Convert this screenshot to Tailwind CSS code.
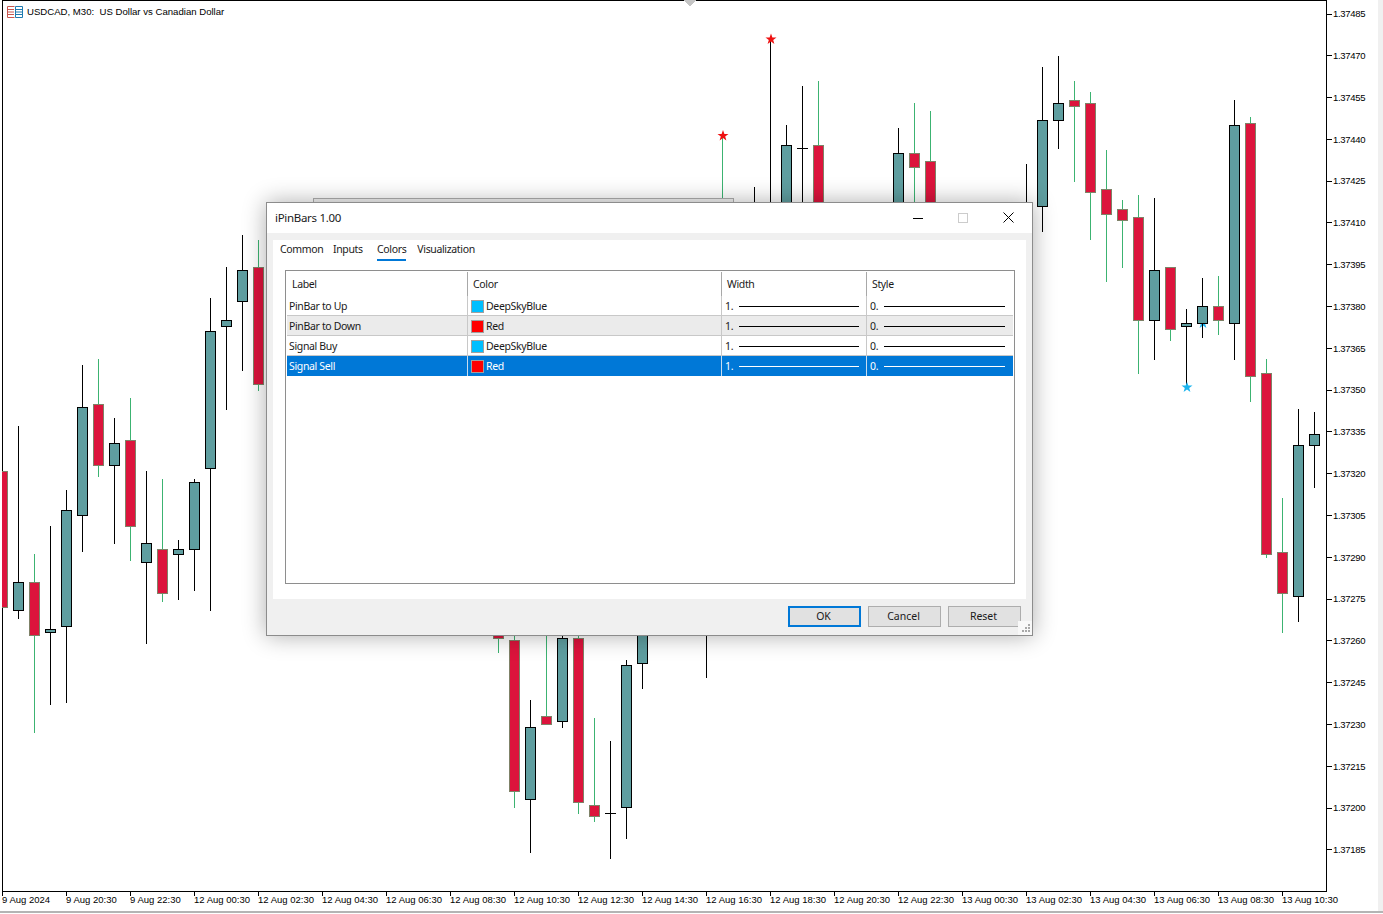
<!DOCTYPE html>
<html lang="en">
<head>
<meta charset="utf-8">
<title>USDCAD, M30</title>
<script src="https://cdn.jsdelivr.net/npm/@tailwindcss/browser@4"></script>
</head>
<body class="bg-white">
<div class="relative w-[1383px] h-[914px] overflow-hidden bg-white text-black font-['Liberation_Sans',sans-serif] text-[9.5px] leading-none">

  <!-- chart + price axis + time axis -->
  <div class="flex h-[913px] border-b-2 border-[#b4b4b4]">
    <div class="flex flex-col w-[1378px]">
      <div class="flex h-[892px]">
        <div class="relative ml-[2px] w-[1325px] h-[892px] border border-black">
          <svg class="absolute left-[-1px] top-[-1px]" width="1325" height="892" viewBox="2 0 1325 892" shape-rendering="crispEdges" fill="none">
            <polygon points="684,0 696,0 690,7" fill="#c4c4c4"/>
            <polygon fill="#1cb4ee" points="1203,318 1204.4,321.4 1208.5,321.5 1205.2,324 1206.4,327.9 1203,325.6 1199.6,327.9 1200.8,324 1197.5,321.5 1201.6,321.4" shape-rendering="geometricPrecision"/>
            <path stroke="#000" d="M18.5 426V619M50.5 526V705M66.5 490V703M82.5 365V552M114.5 418V544M146.5 471V644M178.5 540V600M194.5 479V591M210.5 298V611M226.5 267V410M242.5 235V371M530.5 700V853M562.5 630V728M610.5 741V859M605 813.5H616M626.5 660V839M642.5 630V689M706.5 630V678M754.5 187V210M770.5 39V210M786.5 125V210M802.5 86V210M797 148.5H808M898.5 128V210M1026.5 164V210M1042.5 67V232M1058.5 56V149M1154.5 198V360M1186.5 309V388M1202.5 278V338M1234.5 100V360M1298.5 409V622M1314.5 412V488"/>
            <path stroke="#3cb371" d="M34.5 554V733M98.5 359V477M130.5 398V561M162.5 479V602M258.5 240V391M498.5 630V653M514.5 630V808M546.5 630V724M578.5 630V814M594.5 718V822M722.5 136V210M818.5 81V210M914.5 103V210M930.5 111V210M1074.5 81V182M1090.5 92V240M1106.5 150V282M1122.5 200V268M1138.5 195V374M1170.5 329V341M1218.5 276V335M1250.5 117V402M1266.5 359V558M1282.5 498V633"/>
            <g fill="#5f9ea0" stroke="#000">
              <rect x="13.5" y="582.5" width="10" height="28"/>
              <rect x="45.5" y="629.5" width="10" height="3"/>
              <rect x="61.5" y="510.5" width="10" height="116"/>
              <rect x="77.5" y="407.5" width="10" height="108"/>
              <rect x="109.5" y="443.5" width="10" height="22"/>
              <rect x="141.5" y="543.5" width="10" height="19"/>
              <rect x="173.5" y="549.5" width="10" height="5"/>
              <rect x="189.5" y="482.5" width="10" height="67"/>
              <rect x="205.5" y="331.5" width="10" height="137"/>
              <rect x="221.5" y="320.5" width="10" height="6"/>
              <rect x="237.5" y="270.5" width="10" height="31"/>
              <rect x="525.5" y="727.5" width="10" height="72"/>
              <rect x="557.5" y="638.5" width="10" height="83"/>
              <rect x="621.5" y="665.5" width="10" height="142"/>
              <rect x="637.5" y="630.5" width="10" height="33"/>
              <rect x="781.5" y="145.5" width="10" height="70"/>
              <rect x="893.5" y="153.5" width="10" height="60"/>
              <rect x="1037.5" y="120.5" width="10" height="86"/>
              <rect x="1053.5" y="103.5" width="10" height="17"/>
              <rect x="1149.5" y="270.5" width="10" height="50"/>
              <rect x="1181.5" y="323.5" width="10" height="3"/>
              <rect x="1197.5" y="306.5" width="10" height="17"/>
              <rect x="1229.5" y="125.5" width="10" height="198"/>
              <rect x="1293.5" y="445.5" width="10" height="151"/>
              <rect x="1309.5" y="434.5" width="10" height="11"/>
            </g>
            <g fill="#dc143c" stroke="#7f8268">
              <rect x="-2.5" y="471.5" width="10" height="136"/>
              <rect x="29.5" y="582.5" width="10" height="53"/>
              <rect x="93.5" y="404.5" width="10" height="61"/>
              <rect x="125.5" y="440.5" width="10" height="86"/>
              <rect x="157.5" y="549.5" width="10" height="44"/>
              <rect x="253.5" y="267.5" width="10" height="117"/>
              <rect x="493.5" y="630.5" width="10" height="8"/>
              <rect x="509.5" y="640.5" width="10" height="151"/>
              <rect x="541.5" y="716.5" width="10" height="8"/>
              <rect x="573.5" y="638.5" width="10" height="164"/>
              <rect x="589.5" y="805.5" width="10" height="11"/>
              <rect x="813.5" y="145.5" width="10" height="70"/>
              <rect x="909.5" y="153.5" width="10" height="14"/>
              <rect x="925.5" y="161.5" width="10" height="50"/>
              <rect x="1069.5" y="100.5" width="10" height="6"/>
              <rect x="1085.5" y="103.5" width="10" height="89"/>
              <rect x="1101.5" y="189.5" width="10" height="25"/>
              <rect x="1117.5" y="209.5" width="10" height="11"/>
              <rect x="1133.5" y="217.5" width="10" height="103"/>
              <rect x="1165.5" y="267.5" width="10" height="62"/>
              <rect x="1213.5" y="306.5" width="10" height="14"/>
              <rect x="1245.5" y="123.5" width="10" height="253"/>
              <rect x="1261.5" y="373.5" width="10" height="181"/>
              <rect x="1277.5" y="552.5" width="10" height="41"/>
            </g>
            <g shape-rendering="geometricPrecision">
              <polygon fill="#ee1111" points="723,130 724.4,133.9 728.5,134 725.2,136.5 726.4,140.4 723,138.1 719.6,140.4 720.8,136.5 717.5,134 721.6,133.9"/>
              <polygon fill="#ee1111" points="771,33.5 772.4,37.4 776.5,37.5 773.2,40 774.4,43.9 771,41.6 767.6,43.9 768.8,40 765.5,37.5 769.6,37.4"/>
              <polygon fill="#1cb4ee" points="1187,382 1188.4,385.4 1192.5,385.5 1189.2,388 1190.4,391.9 1187,389.6 1183.6,391.9 1184.8,388 1181.5,385.5 1185.6,385.4"/>
            </g>
          </svg>
          <!-- chart title -->
          <div class="absolute left-[4px] top-[5px] flex items-center gap-[4px] text-[9.6px]">
            <svg width="16" height="12" viewBox="0 0 16 12" fill="none">
              <path stroke="#c8564e" d="M7.5 .5H.5V11.5H7.5M1 3.5H7M1 6H7M1 8.5H7"/>
              <path stroke="#1f7bb0" d="M8.5 .5H15.5V11.5H8.5V.5M9 3.5H15M9 6H15M9 8.5H15"/>
            </svg>
            <span class="whitespace-pre">USDCAD, M30:  US Dollar vs Canadian Dollar</span>
          </div>
        </div>
        <!-- price axis -->
        <div class="flex flex-col mt-[-6.9px] tracking-[-0.3px]">
          <div class="flex items-center h-[41.8px]"><span class="w-[5px] h-px bg-black"></span><span class="ml-[1px]">1.37485</span></div>
          <div class="flex items-center h-[41.8px]"><span class="w-[5px] h-px bg-black"></span><span class="ml-[1px]">1.37470</span></div>
          <div class="flex items-center h-[41.8px]"><span class="w-[5px] h-px bg-black"></span><span class="ml-[1px]">1.37455</span></div>
          <div class="flex items-center h-[41.8px]"><span class="w-[5px] h-px bg-black"></span><span class="ml-[1px]">1.37440</span></div>
          <div class="flex items-center h-[41.8px]"><span class="w-[5px] h-px bg-black"></span><span class="ml-[1px]">1.37425</span></div>
          <div class="flex items-center h-[41.8px]"><span class="w-[5px] h-px bg-black"></span><span class="ml-[1px]">1.37410</span></div>
          <div class="flex items-center h-[41.8px]"><span class="w-[5px] h-px bg-black"></span><span class="ml-[1px]">1.37395</span></div>
          <div class="flex items-center h-[41.8px]"><span class="w-[5px] h-px bg-black"></span><span class="ml-[1px]">1.37380</span></div>
          <div class="flex items-center h-[41.8px]"><span class="w-[5px] h-px bg-black"></span><span class="ml-[1px]">1.37365</span></div>
          <div class="flex items-center h-[41.8px]"><span class="w-[5px] h-px bg-black"></span><span class="ml-[1px]">1.37350</span></div>
          <div class="flex items-center h-[41.8px]"><span class="w-[5px] h-px bg-black"></span><span class="ml-[1px]">1.37335</span></div>
          <div class="flex items-center h-[41.8px]"><span class="w-[5px] h-px bg-black"></span><span class="ml-[1px]">1.37320</span></div>
          <div class="flex items-center h-[41.8px]"><span class="w-[5px] h-px bg-black"></span><span class="ml-[1px]">1.37305</span></div>
          <div class="flex items-center h-[41.8px]"><span class="w-[5px] h-px bg-black"></span><span class="ml-[1px]">1.37290</span></div>
          <div class="flex items-center h-[41.8px]"><span class="w-[5px] h-px bg-black"></span><span class="ml-[1px]">1.37275</span></div>
          <div class="flex items-center h-[41.8px]"><span class="w-[5px] h-px bg-black"></span><span class="ml-[1px]">1.37260</span></div>
          <div class="flex items-center h-[41.8px]"><span class="w-[5px] h-px bg-black"></span><span class="ml-[1px]">1.37245</span></div>
          <div class="flex items-center h-[41.8px]"><span class="w-[5px] h-px bg-black"></span><span class="ml-[1px]">1.37230</span></div>
          <div class="flex items-center h-[41.8px]"><span class="w-[5px] h-px bg-black"></span><span class="ml-[1px]">1.37215</span></div>
          <div class="flex items-center h-[41.8px]"><span class="w-[5px] h-px bg-black"></span><span class="ml-[1px]">1.37200</span></div>
          <div class="flex items-center h-[41.8px]"><span class="w-[5px] h-px bg-black"></span><span class="ml-[1px]">1.37185</span></div>
        </div>
      </div>
      <!-- time axis -->
      <div class="flex ml-[2px] h-[19px] whitespace-nowrap">
        <div class="w-16 border-l border-black h-[4px]"><div class="ml-[-1px] pt-[3px]">9 Aug 2024</div></div>
        <div class="w-16 border-l border-black h-[4px]"><div class="ml-[-1px] pt-[3px]">9 Aug 20:30</div></div>
        <div class="w-16 border-l border-black h-[4px]"><div class="ml-[-1px] pt-[3px]">9 Aug 22:30</div></div>
        <div class="w-16 border-l border-black h-[4px]"><div class="ml-[-1px] pt-[3px]">12 Aug 00:30</div></div>
        <div class="w-16 border-l border-black h-[4px]"><div class="ml-[-1px] pt-[3px]">12 Aug 02:30</div></div>
        <div class="w-16 border-l border-black h-[4px]"><div class="ml-[-1px] pt-[3px]">12 Aug 04:30</div></div>
        <div class="w-16 border-l border-black h-[4px]"><div class="ml-[-1px] pt-[3px]">12 Aug 06:30</div></div>
        <div class="w-16 border-l border-black h-[4px]"><div class="ml-[-1px] pt-[3px]">12 Aug 08:30</div></div>
        <div class="w-16 border-l border-black h-[4px]"><div class="ml-[-1px] pt-[3px]">12 Aug 10:30</div></div>
        <div class="w-16 border-l border-black h-[4px]"><div class="ml-[-1px] pt-[3px]">12 Aug 12:30</div></div>
        <div class="w-16 border-l border-black h-[4px]"><div class="ml-[-1px] pt-[3px]">12 Aug 14:30</div></div>
        <div class="w-16 border-l border-black h-[4px]"><div class="ml-[-1px] pt-[3px]">12 Aug 16:30</div></div>
        <div class="w-16 border-l border-black h-[4px]"><div class="ml-[-1px] pt-[3px]">12 Aug 18:30</div></div>
        <div class="w-16 border-l border-black h-[4px]"><div class="ml-[-1px] pt-[3px]">12 Aug 20:30</div></div>
        <div class="w-16 border-l border-black h-[4px]"><div class="ml-[-1px] pt-[3px]">12 Aug 22:30</div></div>
        <div class="w-16 border-l border-black h-[4px]"><div class="ml-[-1px] pt-[3px]">13 Aug 00:30</div></div>
        <div class="w-16 border-l border-black h-[4px]"><div class="ml-[-1px] pt-[3px]">13 Aug 02:30</div></div>
        <div class="w-16 border-l border-black h-[4px]"><div class="ml-[-1px] pt-[3px]">13 Aug 04:30</div></div>
        <div class="w-16 border-l border-black h-[4px]"><div class="ml-[-1px] pt-[3px]">13 Aug 06:30</div></div>
        <div class="w-16 border-l border-black h-[4px]"><div class="ml-[-1px] pt-[3px]">13 Aug 08:30</div></div>
        <div class="w-16 border-l border-black h-[4px]"><div class="ml-[-1px] pt-[3px]">13 Aug 10:30</div></div>
      </div>
    </div>
    <div class="flex-1 bg-[#f0f0f0]"></div>
  </div>

  <!-- ghost window behind the dialog -->
  <div class="absolute left-[313px] top-[198px] w-[421px] h-[20px] bg-[#f4f4f4] border border-[#b0b0b0]"></div>

  <!-- dialog -->
  <div class="absolute left-[266px] top-[202px] w-[767px] h-[434px] flex flex-col bg-[#f0f0f0] border border-[#8c8c8c] shadow-[0_0_22px_rgba(0,0,0,0.32)] font-['Noto_Sans',sans-serif] text-[#1a1a1a] text-[10.5px] tracking-[-0.35px]">
    <!-- title bar -->
    <div class="flex items-center justify-between h-[30px] bg-white shrink-0 pl-[8px] pr-[18px]">
      <span class="text-[11.5px] tracking-[-0.3px]">iPinBars 1.00</span>
      <div class="flex items-center gap-[35px] -mt-[1px]">
        <svg width="10" height="10" viewBox="0 0 10 10" fill="none"><path stroke="#000" d="M0 5.5H10"/></svg>
        <svg width="10" height="10" viewBox="0 0 10 10" fill="none"><rect x=".5" y=".5" width="9" height="9" stroke="#cccccc"/></svg>
        <svg width="11" height="11" viewBox="0 0 11 11" fill="none"><path stroke="#000" d="M.5 .5L10.5 10.5M10.5 .5L.5 10.5"/></svg>
      </div>
    </div>
    <!-- panel -->
    <div class="mx-[6px] mt-[7px] h-[359px] bg-white shrink-0 px-[12px]">
      <div class="flex h-[30px] -mx-[5px] items-start pt-[2px]">
        <span class="w-[53px] h-[17px] leading-[14px]">Common</span>
        <span class="w-[44px] h-[17px] leading-[14px]">Inputs</span>
        <span class="mr-[11px] h-[19px] leading-[14px] border-b-2 border-[#0078d7]">Colors</span>
        <span class="h-[17px] leading-[14px]">Visualization</span>
      </div>
      <div class="w-[730px] h-[314px] border border-[#8e8e8e] p-px">
        <div class="grid grid-cols-[180px_254px_145px_1fr] h-[24px]">
          <div class="pl-[5px] pt-[7px]">Label</div>
          <div class="pl-[5px] pt-[7px] border-l border-[#a8a8a8]">Color</div>
          <div class="pl-[5px] pt-[7px] border-l border-[#a8a8a8]">Width</div>
          <div class="pl-[5px] pt-[7px] border-l border-[#a8a8a8]">Style</div>
        </div>
        <div class="grid grid-cols-[180px_254px_145px_1fr] h-[20px] items-stretch border-b border-[#c8c8c8]">
          <div class="pl-[2px] pt-[2px] flex items-center">PinBar to Up</div>
          <div class="pl-[3px] pt-[2px] flex items-center gap-[2px] border-l border-[#c8c8c8]"><span class="w-[13px] h-[13px] bg-[#00bfff] border border-[#a0a0a0]"></span>DeepSkyBlue</div>
          <div class="pl-[3px] pt-[2px] flex items-center border-l border-[#c8c8c8]"><span class="w-[14px]">1.</span><span class="w-[120px] h-px bg-black"></span></div>
          <div class="pl-[3px] pt-[2px] flex items-center border-l border-[#c8c8c8]"><span class="w-[14px]">0.</span><span class="w-[121px] h-px bg-black"></span></div>
        </div>
        <div class="grid grid-cols-[180px_254px_145px_1fr] h-[20px] items-stretch border-b border-[#c8c8c8] bg-[#ebebeb]">
          <div class="pl-[2px] pt-[2px] flex items-center">PinBar to Down</div>
          <div class="pl-[3px] pt-[2px] flex items-center gap-[2px] border-l border-[#c8c8c8]"><span class="w-[13px] h-[13px] bg-[#ff0000] border border-[#a0a0a0]"></span>Red</div>
          <div class="pl-[3px] pt-[2px] flex items-center border-l border-[#c8c8c8]"><span class="w-[14px]">1.</span><span class="w-[120px] h-px bg-black"></span></div>
          <div class="pl-[3px] pt-[2px] flex items-center border-l border-[#c8c8c8]"><span class="w-[14px]">0.</span><span class="w-[121px] h-px bg-black"></span></div>
        </div>
        <div class="grid grid-cols-[180px_254px_145px_1fr] h-[20px] items-stretch border-b border-[#c8c8c8]">
          <div class="pl-[2px] pt-[2px] flex items-center">Signal Buy</div>
          <div class="pl-[3px] pt-[2px] flex items-center gap-[2px] border-l border-[#c8c8c8]"><span class="w-[13px] h-[13px] bg-[#00bfff] border border-[#a0a0a0]"></span>DeepSkyBlue</div>
          <div class="pl-[3px] pt-[2px] flex items-center border-l border-[#c8c8c8]"><span class="w-[14px]">1.</span><span class="w-[120px] h-px bg-black"></span></div>
          <div class="pl-[3px] pt-[2px] flex items-center border-l border-[#c8c8c8]"><span class="w-[14px]">0.</span><span class="w-[121px] h-px bg-black"></span></div>
        </div>
        <div class="grid grid-cols-[180px_254px_145px_1fr] h-[20px] items-stretch bg-[#0078d7] text-white">
          <div class="pl-[2px] flex items-center">Signal Sell</div>
          <div class="pl-[3px] flex items-center gap-[2px] border-l border-[#c8dcef]"><span class="w-[13px] h-[13px] bg-[#ff0000] border border-[#a0a0a0]"></span>Red</div>
          <div class="pl-[3px] flex items-center border-l border-[#c8dcef]"><span class="w-[14px]">1.</span><span class="w-[120px] h-px bg-white"></span></div>
          <div class="pl-[3px] flex items-center border-l border-[#c8dcef]"><span class="w-[14px]">0.</span><span class="w-[121px] h-px bg-white"></span></div>
        </div>
      </div>
    </div>
    <!-- footer -->
    <div class="relative flex-1 flex justify-end items-start gap-[7px] pt-[7px] pr-[11px] tracking-[0px]">
      <button class="w-[73px] h-[21px] pr-[2px] bg-[#e1e1e1] border-2 border-[#0078d7]">OK</button>
      <button class="w-[73px] h-[21px] pr-[2px] bg-[#e1e1e1] border border-[#adadad]">Cancel</button>
      <button class="w-[73px] h-[21px] pr-[2px] bg-[#e1e1e1] border border-[#adadad]">Reset</button>
      <svg class="absolute right-0 bottom-0" width="14" height="14" viewBox="0 0 14 14"><rect width="14" height="14" fill="#f8f8f8"/><path fill="#a8a8a8" d="M10 3h2v2h-2zM7 6h2v2H7zM10 6h2v2h-2zM4 9h2v2H4zM7 9h2v2H7zM10 9h2v2h-2z"/></svg>
    </div>
  </div>
</div>
</body>
</html>
